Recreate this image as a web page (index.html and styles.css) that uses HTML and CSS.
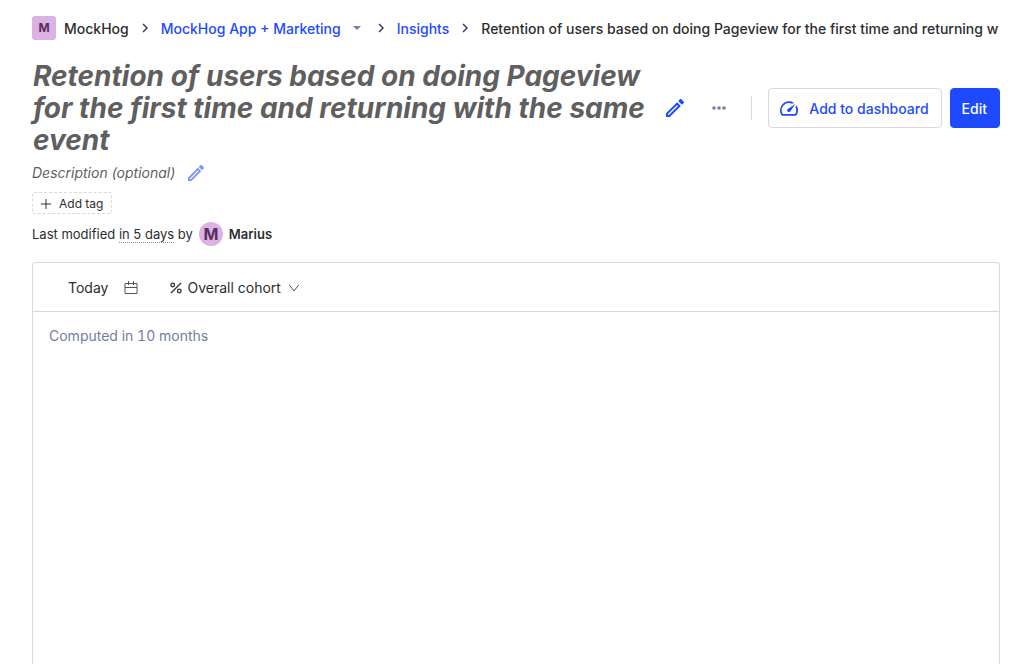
FILE: index.html
```html
<!DOCTYPE html>
<html lang="en">
<head>
<meta charset="utf-8">
<meta name="viewport" content="width=device-width, initial-scale=1">
<title>Insight - MockHog</title>
<link rel="stylesheet" href="styles.css">
</head>
<body>
<main class="page">
  <nav class="breadcrumbs" aria-label="Breadcrumb">
    <span class="lettermark">M</span>
    <span class="crumb">MockHog</span>
    <svg class="sep" viewBox="0 0 8 10" aria-hidden="true"><path d="M2 1l4 4-4 4"/></svg>
    <a class="crumb" href="#project">MockHog App + Marketing</a>
    <button class="project-switch" type="button" aria-label="Switch project"><svg viewBox="0 0 8 4" aria-hidden="true"><path d="M0 0h8L4 4z"/></svg></button>
    <svg class="sep" viewBox="0 0 8 10" aria-hidden="true"><path d="M2 1l4 4-4 4"/></svg>
    <a class="crumb" href="#insights">Insights</a>
    <svg class="sep" viewBox="0 0 8 10" aria-hidden="true"><path d="M2 1l4 4-4 4"/></svg>
    <span class="crumb crumb-here">Retention of users based on doing Pageview for the first time and returning with the same event</span>
  </nav>

  <header class="header">
    <div class="title-area">
      <h1>Retention of users based on doing Pageview for the first time and returning with the same event</h1>
      <button class="icon-button" type="button" aria-label="Edit name"><svg class="pencil" viewBox="3 3 18 18" aria-hidden="true"><path d="M14.06 9.02l.92.92L5.92 19H5v-.92l9.06-9.06M17.66 3c-.25 0-.51.1-.7.29l-1.83 1.83 3.75 3.75 1.83-1.83c.39-.39.39-1.02 0-1.41l-2.34-2.34c-.2-.2-.45-.29-.71-.29zm-3.6 3.19L3 17.25V21h3.75L17.81 9.94l-3.75-3.75z"/></svg></button>
    </div>
    <div class="actions">
      <button class="more" type="button" aria-label="More"><svg viewBox="0 0 14 4" aria-hidden="true"><circle cx="2" cy="2" r="1.8"/><circle cx="7" cy="2" r="1.8"/><circle cx="12" cy="2" r="1.8"/></svg></button>
      <span class="divider"></span>
      <button class="button" type="button">
        <svg class="gauge" viewBox="2 4 20 16" aria-hidden="true"><path d="M20.38 8.57l-1.23 1.85a8 8 0 0 1-.22 7.58H5.07A8 8 0 0 1 15.58 6.85l1.85-1.23A10 10 0 0 0 3.35 19a2 2 0 0 0 1.72 1h13.85a2 2 0 0 0 1.74-1 10 10 0 0 0-.27-10.44zm-9.79 6.84a2 2 0 0 0 2.83 0l5.66-8.49-8.490 5.66a2 2 0 0 0 0 2.83z"/></svg>
        Add to dashboard
      </button>
      <button class="button button-primary" type="button">Edit</button>
    </div>
  </header>

  <div class="description">
    <em>Description (optional)</em>
    <button class="icon-button faded" type="button" aria-label="Edit description"><svg class="pencil pencil-small" viewBox="3 3 18 18" aria-hidden="true"><path d="M14.06 9.02l.92.92L5.92 19H5v-.92l9.06-9.06M17.66 3c-.25 0-.51.1-.7.29l-1.83 1.83 3.75 3.75 1.83-1.83c.39-.39.39-1.02 0-1.41l-2.34-2.34c-.2-.2-.45-.29-.71-.29zm-3.6 3.19L3 17.25V21h3.75L17.81 9.94l-3.75-3.75z"/></svg></button>
  </div>
  <button class="add-tag" type="button"><svg viewBox="0 0 10 10" aria-hidden="true"><path d="M5 0v10M0 5h10"/></svg>Add tag</button>
  <div class="modified">
    <span>Last modified <span class="time">in 5 days</span> by</span>
    <span class="avatar">M</span>
    <strong>Marius</strong>
  </div>

  <section class="card">
    <div class="toolbar">
      <button class="date" type="button">Today
        <svg viewBox="0 0 14 14" aria-hidden="true"><path d="M1 2.5h12v10H1zM1 6.5h12M4.5 0v4M9.5 0v4"/></svg>
      </button>
      <button class="cohort" type="button">
        <svg class="percent" viewBox="0 0 12 12" aria-hidden="true"><circle cx="2.7" cy="3" r="1.8"/><circle cx="9.3" cy="9" r="1.8"/><path d="M11 1L1 11"/></svg>
        <span>Overall cohort</span>
        <svg class="chevron" viewBox="0 0 10 8" aria-hidden="true"><path d="M0 0.5L5 7l5-6.5"/></svg>
      </button>
    </div>
    <p class="computed">Computed in 10 months</p>
  </section>
</main>
</body>
</html>
```
FILE: styles.css
```css
* { box-sizing: border-box; }
body {
  margin: 0;
  background: #fff;
  color: #2d2d2d;
  font: 14px/22px Inter, "Liberation Sans", sans-serif;
}
button {
  margin: 0;
  padding: 0;
  border: 0;
  background: none;
  color: inherit;
  font: inherit;
  cursor: pointer;
}
svg { display: block; flex: none; }
a { color: #1d4aff; text-decoration: none; }
.page {
  display: flex;
  flex-direction: column;
  align-items: stretch;
  min-height: 100vh;
  padding: 16px 32px 0;
}
.breadcrumbs {
  display: flex;
  align-items: center;
  height: 24px;
  overflow: hidden;
  white-space: nowrap;
  font-weight: 500;
}
.crumb { line-height: 24px; padding-top: 1px; }
.crumb-here { overflow: hidden; min-width: 0; margin-right: 1px; }
.lettermark, .avatar {
  display: flex;
  flex: none;
  align-items: center;
  justify-content: center;
  width: 24px;
  height: 24px;
  background: #dcb1e3;
  color: #572e5e;
  font-weight: 700;
}
.lettermark { margin-right: 8px; border-radius: 3px; font-size: 12px; }
.sep {
  width: 8px;
  height: 10px;
  margin: 0 12px;
  fill: none;
  stroke: #35416b;
  stroke-width: 1.5;
}
.project-switch { margin: 0 4px 0 12px; }
.project-switch svg { width: 8px; height: 4px; fill: #747ea2; }
.header {
  display: flex;
  align-items: center;
  justify-content: space-between;
  margin-top: 20px;
}
.title-area { display: flex; flex: 1; align-items: center; min-width: 0; }
h1 {
  margin: 0;
  padding-left: 1px;
  max-width: 621px;
  color: #5f5f5f;
  font-size: 28px;
  line-height: 32px;
  font-weight: 700;
  font-style: italic;
}
.icon-button { flex: none; margin-left: 13px; color: #1d4aff; }
.pencil { width: 18px; height: 18px; fill: currentColor; }
.pencil-small { width: 16px; height: 16px; }
.faded { opacity: 0.6; }
.actions { display: flex; flex: none; align-items: center; gap: 8px; }
.more { padding: 12px 17px 12px 20px; }
.more svg { width: 14px; height: 4px; fill: #747ea2; }
.divider { width: 1px; height: 24px; margin-right: 8px; background: #d9d9d9; }
.button {
  display: flex;
  align-items: center;
  gap: 11px;
  height: 40px;
  padding: 1px 12px 0 11px;
  border: 1px solid #d9d9d9;
  border-radius: 4px;
  color: #1d4aff;
  font-weight: 500;
  white-space: nowrap;
}
.button-primary { border-color: #1d4aff; background: #1d4aff; color: #fff; }
.gauge { width: 18px; height: 15px; fill: currentColor; }
.description { display: flex; align-items: center; margin-top: 6px; color: #5f5f5f; }
.add-tag {
  display: flex;
  align-items: center;
  align-self: flex-start;
  gap: 8px;
  height: 22px;
  margin-top: 8px;
  padding: 1px 8px 0;
  border: 1px dashed #d9d9d9;
  border-radius: 2px;
  font-size: 12px;
}
.add-tag svg { width: 10px; height: 10px; fill: none; stroke: #2d2d2d; }
.modified { display: flex; align-items: center; gap: 6px; margin-top: 8px; font-size: 13px; line-height: 16px; }
.modified strong { font-weight: 600; }
.time { border-bottom: 1px dotted #8f8f8f; }
.avatar { border-radius: 50%; font-size: 16px; }
.card {
  flex: 1;
  margin-top: 16px;
  border: 1px solid #d9d9d9;
  border-bottom: 0;
  border-radius: 4px 4px 0 0;
}
.toolbar {
  display: flex;
  align-items: center;
  gap: 32px;
  height: 49px;
  padding: 1px 35px 0;
  border-bottom: 1px solid #d9d9d9;
}
.date { display: flex; align-items: center; gap: 16px; }
.date svg { width: 14px; height: 14px; fill: none; stroke: #555; }
.cohort { display: flex; align-items: center; }
.percent { width: 12px; height: 12px; margin-right: 5px; fill: none; stroke: #2d2d2d; stroke-width: 1.3; }
.chevron { width: 10px; height: 8px; margin-left: 8px; fill: none; stroke: #555; }
.computed { margin: 13px 16px; color: #747ea2; font-variant-numeric: tabular-nums; }
```
